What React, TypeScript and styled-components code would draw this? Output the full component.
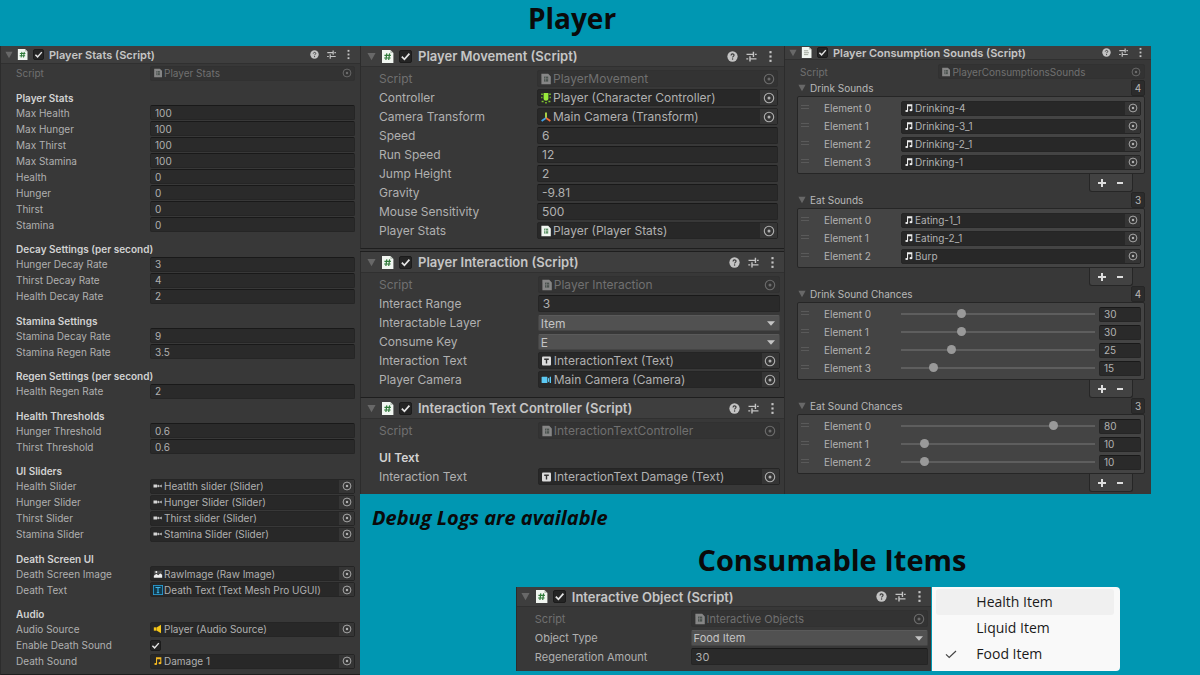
import React, { createContext, useContext, useId } from 'react';
import styled, { createGlobalStyle, css } from 'styled-components';

const GlobalStyle = createGlobalStyle`
  * { box-sizing: border-box; }
  body {
    margin: 0;
    background: #0097b2;
    font-family: Inter, 'Liberation Sans', sans-serif;
  }
  h1, h2, h3, p, ul { margin: 0; padding: 0; }
  ul { list-style: none; }
  button, input, select { font: inherit; color: inherit; margin: 0; }
`;

interface Density {
  font: number;
  title: number;
  header: number;
  row: number;
  field: number;
  heading: number;
  headingGap: number;
  icon: number;
  iconGap: number;
  arrow: number;
  start: number;
  inset: number;
  labelPart: number;
  valuePart: number;
  topGap: number;
  bottomGap: number;
}

const compact: Density = {
  font: 10, title: 11, header: 18, row: 16, field: 15, heading: 14, headingGap: 9,
  icon: 11, iconGap: 5, arrow: 9, start: 4, inset: 16, labelPart: 134, valuePart: 205,
  topGap: 1, bottomGap: 5,
};

const roomy: Density = {
  font: 12, title: 13, header: 21, row: 19, field: 17, heading: 18, headingGap: 9,
  icon: 13, iconGap: 6, arrow: 10, start: 6, inset: 19, labelPart: 158, valuePart: 241,
  topGap: 2, bottomGap: 8,
};

const sounds: Density = {
  ...compact, header: 14, row: 17, labelPart: 138, valuePart: 206, topGap: 3, bottomGap: 2,
};

const item: Density = {
  ...roomy, font: 11, header: 20, start: 4, labelPart: 156, valuePart: 238, bottomGap: 5,
};

const DensityContext = createContext<Density>(compact);

/* ---------- page ---------- */

const Page = styled.main`
  min-height: 100vh;
  display: flex;
  flex-direction: column;
`;

const PageTitle = styled.h1`
  font-family: 'Open Sans', 'Noto Sans', sans-serif;
  font-size: 28px;
  font-weight: 700;
  line-height: 36px;
  padding: 0 56px 10px 0;
  text-align: center;
  color: #0a0a0a;
`;

const Columns = styled.div`
  flex: 1;
  display: grid;
  grid-template-columns: 3fr 7fr;
`;

const RightSide = styled.div`
  min-width: 0;
`;

const TopPanels = styled.div`
  display: grid;
  grid-template-columns: 424fr 367fr 49fr;
  align-items: start;
`;

const Stack = styled.div`
  min-width: 0;
`;

const Note = styled.p`
  margin-top: 10px;
  padding-left: 12px;
  font-family: 'Open Sans', 'Noto Sans', sans-serif;
  font-size: 20px;
  font-style: italic;
  font-weight: 700;
  line-height: 28px;
  color: #0a0a0a;
`;

const ItemArea = styled.section`
  display: grid;
  grid-template-columns: 155fr 416fr 188fr 79fr;
  column-gap: 1px;
`;

const ItemTitle = styled.h2`
  grid-column: 2 / 4;
  padding-left: 28px;
  font-family: 'Open Sans', 'Noto Sans', sans-serif;
  font-size: 29px;
  font-weight: 700;
  line-height: 55px;
  text-align: center;
  color: #0a0a0a;
`;

const ItemPanel = styled.div`
  grid-column: 2;
  min-width: 0;
`;

const Menu = styled.ul`
  padding: 2px 6px 3px 4px;
  background: #f9f9f9;
  border-radius: 0 4px 4px 0;
`;

const MenuItem = styled.button<{ $active?: boolean }>`
  width: 100%;
  height: 26px;
  display: flex;
  align-items: center;
  border: 0;
  padding: 0 0 1px 9px;
  border-radius: 3px;
  background: ${(p) => (p.$active ? '#f0f0f0' : 'transparent')};
  font-family: 'Open Sans', 'Noto Sans', sans-serif;
  font-size: 14px;
  color: #1b1b1b;
  white-space: nowrap;
`;

const MenuMark = styled.span`
  width: 31px;
  display: flex;
`;

/* ---------- inspector parts ---------- */

const PanelBox = styled.section<{ $separated?: boolean }>`
  display: flex;
  flex-direction: column;
  min-width: 0;
  background: #383838;
  color: #b6b6b6;
  border-left: 1px solid #2c2c2c;
  ${(p) => p.$separated && css`
    border-bottom: 1px solid #1e1e1e;
  `}
`;

const Divider = styled.div`
  height: 3px;
  background: #383838;
  border-bottom: 1px solid #1e1e1e;
`;

const HeaderBar = styled.header<{ $d: Density; $end: number }>`
  height: ${(p) => p.$d.header}px;
  display: flex;
  align-items: center;
  padding: 0 ${(p) => p.$end}px 0 ${(p) => p.$d.start}px;
  background: #3e3e3e;
  border-bottom: 1px solid #303030;
`;

const Foldout = styled.button<{ $w: number }>`
  width: ${(p) => p.$w}px;
  height: 12px;
  display: flex;
  align-items: center;
  justify-content: flex-start;
  border: 0;
  padding: 0;
  background: none;
  color: #686868;
  flex: none;
`;

const HeaderIcon = styled.span<{ $gap: number }>`
  display: flex;
  margin: 0 5px 0 ${(p) => p.$gap - 2}px;
`;

const PanelTitle = styled.h3<{ $d: Density }>`
  flex: 1;
  min-width: 0;
  margin-left: ${(p) => p.$d.iconGap}px;
  font-size: ${(p) => p.$d.title}px;
  font-weight: 600;
  line-height: ${(p) => p.$d.header - 2}px;
  white-space: nowrap;
  color: #c6c6c6;
`;

const Tools = styled.div`
  display: flex;
  gap: 6px;
`;

const ToolButton = styled.button<{ $size: number }>`
  width: ${(p) => p.$size}px;
  height: ${(p) => p.$size}px;
  display: flex;
  align-items: center;
  justify-content: center;
  padding: 0;
  border: 0;
  background: none;
  color: #c4c4c4;
`;

const Body = styled.div<{ $d: Density; $end: number; $fill?: boolean }>`
  padding: ${(p) => `${p.$d.topGap}px ${p.$end}px ${p.$d.bottomGap}px ${p.$d.inset - 1}px`};
  display: flex;
  flex-direction: column;
  ${(p) => p.$fill && css`
    flex: 1;
    justify-content: space-between;
  `}
`;

const Group = styled.div`
  display: flex;
  flex-direction: column;
`;

const GroupTitle = styled.h3<{ $d: Density }>`
  margin-top: ${(p) => p.$d.headingGap}px;
  font-size: ${(p) => p.$d.font}px;
  line-height: ${(p) => p.$d.heading}px;
  font-weight: 600;
  color: #d2d2d2;
`;

const Row = styled.div<{ $d: Density; $dim?: boolean }>`
  height: ${(p) => p.$d.row}px;
  display: grid;
  grid-template-columns: ${(p) => `${p.$d.labelPart}fr ${p.$d.valuePart}fr`};
  align-items: center;
  font-size: ${(p) => p.$d.font}px;
  color: ${(p) => (p.$dim ? '#707070' : '#b0b0b0')};
`;

const RowLabel = styled.label`
  white-space: nowrap;
  min-width: 0;
`;

const TextInput = styled.input<{ $h: number }>`
  width: 100%;
  min-width: 0;
  height: ${(p) => p.$h}px;
  padding: 0 4px;
  border: 1px solid #252525;
  border-top-color: #191919;
  border-radius: 2px;
  background: #2a2a2a;
`;

const ObjectBox = styled.div<{ $h: number; $dim?: boolean }>`
  min-width: 0;
  height: ${(p) => p.$h}px;
  display: flex;
  align-items: center;
  gap: 1px;
  padding-left: 2px;
  border: 1px solid ${(p) => (p.$dim ? '#313131' : '#252525')};
  border-radius: 2px;
  background: ${(p) => (p.$dim ? '#333333' : '#282828')};
`;

const ObjectName = styled.span`
  flex: 1;
  min-width: 0;
  overflow: hidden;
  white-space: nowrap;
`;

const Picker = styled.button<{ $w: number }>`
  align-self: stretch;
  width: ${(p) => p.$w}px;
  flex: none;
  display: flex;
  align-items: center;
  justify-content: center;
  border: 0;
  padding: 0;
  background: #353535;
  color: #b0b0b0;
  &:disabled { background: none; color: #6c6c6c; }
`;

const SelectWrap = styled.div<{ $h: number }>`
  height: ${(p) => p.$h}px;
  display: grid;
  grid-template-columns: 1fr 12px;
  align-items: center;
  background: #515151;
  border: 1px solid #454545;
  border-top-color: #5a5a5a;
  border-radius: 2px;
  color: #c4c4c4;
  svg { grid-area: 1 / 2; pointer-events: none; }
`;

const Select = styled.select`
  grid-area: 1 / 1 / 2 / 3;
  width: 100%;
  height: 100%;
  appearance: none;
  border: 0;
  padding: 0 2px 1px;
  background: none;
`;

const CheckWrap = styled.span<{ $size: number }>`
  width: ${(p) => p.$size}px;
  height: ${(p) => p.$size}px;
  flex: none;
  display: grid;
  svg { grid-area: 1 / 1; pointer-events: none; }
`;

const CheckInput = styled.input`
  grid-area: 1 / 1;
  width: 100%;
  height: 100%;
  appearance: none;
  background: #242424;
  border: 1px solid #1b1b1b;
  border-radius: 2px;
`;

/* ---------- list parts ---------- */

const ListHead = styled.div`
  height: 16px;
  margin-left: -2px;
  display: flex;
  align-items: center;
  font-size: 10px;
  color: #b8b8b8;
`;

const ListName = styled.span`
  flex: 1;
  padding-left: 3px;
`;

const Count = styled.input`
  width: 14px;
  height: 16px;
  padding: 0;
  text-align: center;
  border: 1px solid #262626;
  border-radius: 2px;
  background: #2c2c2c;
`;

const ListBox = styled.div`
  margin-left: -3px;
  padding: 2px 3px 2px 3px;
  border: 1px solid #262626;
  border-radius: 2px;
  background: #444444;
`;

const ListRow = styled.div`
  height: 18px;
  display: grid;
  grid-template-columns: 23px 77px 1fr;
  align-items: center;
  font-size: 10px;
  color: #b2b2b2;
`;

const Grip = styled.span`
  width: 8px;
  height: 4px;
  margin-bottom: 3px;
  border-top: 1px solid #5a5a5a;
  border-bottom: 1px solid #5a5a5a;
`;

const SliderCell = styled.div`
  display: grid;
  grid-template-columns: 1fr 42px;
  column-gap: 4px;
  align-items: center;
`;

const Range = styled.input`
  appearance: none;
  width: 100%;
  min-width: 0;
  height: 9px;
  background: none;
  &::-webkit-slider-runnable-track {
    height: 2px;
    background: #5e5e5e;
  }
  &::-webkit-slider-thumb {
    appearance: none;
    width: 9px;
    height: 9px;
    margin-top: -4px;
    border-radius: 50%;
    background: #999999;
  }
`;

const ListFoot = styled.div`
  align-self: flex-end;
  width: 44px;
  height: 18px;
  margin-right: 12px;
  display: flex;
  padding: 0 3px;
  border: 1px solid #262626;
  border-top: 0;
  border-radius: 0 0 3px 3px;
  background: #424242;
`;

const FootButton = styled.button`
  flex: 1;
  display: flex;
  align-items: center;
  justify-content: center;
  border: 0;
  padding: 0;
  background: none;
  color: #dedede;
`;

/* ---------- icons ---------- */

const Triangle = ({ size = 8 }: { size?: number }) => (
  <svg width={size} height={size} viewBox="0 0 10 10"><path d="M0.5 1h9L5 9.2z" fill="currentColor" /></svg>
);

const SelectArrow = () => (
  <svg width="8" height="5" viewBox="0 0 8 5"><path d="M0 0.2h8L4 4.8z" fill="currentColor" /></svg>
);

const ScriptIcon = ({ size, kind = 'color' }: { size: number; kind?: 'color' | 'small' | 'dim' | 'plain' }) => {
  const paper = kind === 'dim' ? '#868686' : '#f1f6f1';
  if (kind === 'dim' || kind === 'small') {
    return (
      <svg width={size} height={size} viewBox="0 0 12 12">
        <path d="M1.4 0.8h6.8L10.8 3.4v7.8H1.4z" fill={paper} />
        <path d="M4 3.6h4.2v5H4z" fill={kind === 'dim' ? '#4a524e' : '#5f9468'} />
        <path d="M5.4 3.6v5M4 5.8h4.2" stroke={paper} strokeWidth="0.6" />
      </svg>
    );
  }
  return (
    <svg width={size} height={size} viewBox="0 0 13 13">
      <path d="M1 0h8.4L12.4 3v10H1z" fill={paper} />
      <path d="M9.4 0v3h3z" fill="#b9c2b9" />
      {kind === 'plain' ? (
        <path d="M3.5 4.5h5M3.5 6.8h6M3.5 9h5" stroke="#9aa093" strokeWidth="1.1" fill="none" />
      ) : (
        <path d="M5.8 3.4L4.9 10M8.6 3.4L7.7 10M3.4 5.4h6.5M3.1 8h6.5" stroke="#2f7a3a" strokeWidth="1.2" fill="none" />
      )}
    </svg>
  );
};

const HelpIcon = ({ size }: { size: number }) => (
  <svg width={size} height={size} viewBox="0 0 12 12">
    <circle cx="6" cy="6" r="5.6" fill="currentColor" />
    <path d="M4.4 4.8c0-2.2 3.3-2.1 3.3-.2 0 1.2-1.6 1.2-1.6 2.4" stroke="#3a3a3a" strokeWidth="1.2" fill="none" />
    <circle cx="6.1" cy="8.7" r="0.8" fill="#3a3a3a" />
  </svg>
);

const PresetIcon = ({ size }: { size: number }) => (
  <svg width={size} height={size} viewBox="0 0 12 12" stroke="currentColor" strokeWidth="1.3" fill="none">
    <path d="M1.4 4h6M9.2 4h1.6M7.8 1.6v4.8M1.2 8.2h1.8M5 8.2h5.6M4.6 5.8v4.8" />
  </svg>
);

const DotsIcon = ({ size }: { size: number }) => (
  <svg width={size} height={size} viewBox="0 0 12 12" fill="currentColor">
    <rect x="5" y="1" width="2" height="2" /><rect x="5" y="5" width="2" height="2" /><rect x="5" y="9" width="2" height="2" />
  </svg>
);

const CheckMark = ({ size }: { size: number }) => (
  <svg width={size} height={size} viewBox="0 0 12 12">
    <path d="M2.6 6.2L5 8.6L9.6 3.4" stroke="#e4e4e4" strokeWidth="1.6" fill="none" />
  </svg>
);

const TargetIcon = ({ size }: { size: number }) => (
  <svg width={size} height={size} viewBox="0 0 12 12">
    <circle cx="6" cy="6" r="4.7" stroke="currentColor" strokeWidth="1.1" fill="none" />
    <circle cx="6" cy="6" r="1.5" fill="currentColor" />
  </svg>
);

type Glyph = 'script' | 'scriptDim' | 'slider' | 'image' | 'tmp' | 'audio' | 'clip' | 'clipWhite' | 'controller' | 'transform' | 'text' | 'camera';

const note = (fill: string) => (
  <g fill={fill}>
    <path d="M3.6 1.4h6.4v7.4H8.7V3.8H4.9v6H3.6z" />
    <ellipse cx="3.2" cy="9.6" rx="1.7" ry="1.3" />
    <ellipse cx="8.3" cy="8.6" rx="1.7" ry="1.3" />
  </g>
);

const glyphs: Partial<Record<Glyph, React.ReactNode>> = {
  slider: <g fill="#d6d6d6"><rect x="0.6" y="4.2" width="4.4" height="3.6" /><path d="M5 5.4h1.6v1.2H5zM6.2 4.2L8.2 6 6.2 7.8zM10.4 4.2L8 6l2.4 1.8z" /></g>,
  image: <g><path d="M1 2h10v4L8.5 4.6 6.5 7 4 5.4 1 8z" fill="#4c4c4c" /><path d="M1 10.4V8.2L4 5.6l2.4 1.8L8.6 5 11 7v3.4z" fill="#efefef" /><circle cx="4" cy="3.5" r="1.2" fill="#efefef" /></g>,
  tmp: <g><rect x="0.5" y="0.5" width="11" height="11" fill="#123a4c" stroke="#2a9fd6" /><path d="M3 3h6M6 3v6.4M4.6 9.2h2.8" stroke="#3fb6ea" strokeWidth="1.2" /></g>,
  audio: <g fill="#f5c518"><rect x="1" y="4" width="3.4" height="4" /><path d="M4.8 4L9.6 1v10L4.8 8z" /></g>,
  clip: note('#f5b921'),
  clipWhite: note('#ededed'),
  controller: <g><path d="M3.6 1h4.8v5.6c0 3-4.8 3-4.8 0z" fill="#9aec3c" /><path d="M1.2 2.2h1.6M9.2 2.2h1.6M1.2 5.4h1.2M9.6 5.4h1.2M1.6 9.4h2M8.4 9.4h2M5.2 10.8h1.6" stroke="#7cc42e" strokeWidth="1.5" /></g>,
  transform: <g fill="none" strokeWidth="1.8"><path d="M6 7V1.4" stroke="#b6e04a" /><path d="M6 7L1.6 10" stroke="#3f9fe8" /><path d="M6 7l4.4 3" stroke="#ef6a35" /></g>,
  text: <g><rect x="1" y="1.6" width="9" height="9" rx="1" fill="#dcdcdc" /><path d="M3.2 4.2h4.6M5.5 4.2v4.4" stroke="#333333" strokeWidth="1.4" /></g>,
  camera: <g fill="#5cc8f2"><rect x="0.6" y="2.8" width="5.8" height="6.2" rx="0.6" /><path d="M7 4.4l1.2-1v5L7 7.4zM8.8 2.8H10v6.2H8.8z" /></g>,
};

const AssetIcon = ({ name, size }: { name: Glyph; size: number }) => {
  if (name === 'script') return <ScriptIcon size={size} kind="small" />;
  if (name === 'scriptDim') return <ScriptIcon size={size} kind="dim" />;
  return <svg width={size} height={size} viewBox="0 0 12 12">{glyphs[name]}</svg>;
};

/* ---------- composed controls ---------- */

const Check = ({ size, id, label }: { size: number; id?: string; label?: string }) => (
  <CheckWrap $size={size}>
    <CheckInput type="checkbox" id={id} aria-label={label} defaultChecked />
    <CheckMark size={size} />
  </CheckWrap>
);

const ObjectField = ({ id, icon, value, dim, h, size }: { id: string; icon: Glyph; value: string; dim?: boolean; h: number; size: number }) => (
  <ObjectBox $h={h} $dim={dim}>
    <AssetIcon name={icon} size={size - 1} />
    <ObjectName>{value}</ObjectName>
    <Picker id={id} $w={size + 4} disabled={dim}><TargetIcon size={size - 1} /></Picker>
  </ObjectBox>
);

interface FieldProps {
  label: string;
  value?: string;
  icon?: Glyph;
  kind?: 'text' | 'object' | 'select' | 'check';
  dim?: boolean;
}

const Field = ({ label, value = '', icon = 'script', kind = 'text', dim }: FieldProps) => {
  const d = useContext(DensityContext);
  const id = useId();
  return (
    <Row $d={d} $dim={dim}>
      <RowLabel htmlFor={id}>{label}</RowLabel>
      {kind === 'text' && <TextInput id={id} $h={d.field} defaultValue={value} />}
      {kind === 'object' && <ObjectField id={id} icon={icon} value={value} dim={dim} h={d.field} size={d.icon} />}
      {kind === 'select' && (
        <SelectWrap $h={d.field - 1}>
          <Select id={id} defaultValue={value}><option>{value}</option></Select>
          <SelectArrow />
        </SelectWrap>
      )}
      {kind === 'check' && <Check size={d.icon} id={id} />}
    </Row>
  );
};

const Script = ({ name }: { name: string }) => <Field label="Script" value={name} icon="scriptDim" kind="object" dim />;

interface PanelProps {
  title: string;
  density: Density;
  bodyEnd: number;
  toolsEnd: number;
  fill?: boolean;
  separated?: boolean;
  plainIcon?: boolean;
  children: React.ReactNode;
}

const Panel = ({ title, density: d, bodyEnd, toolsEnd, fill, separated, plainIcon, children }: PanelProps) => (
  <DensityContext.Provider value={d}>
    <PanelBox $separated={separated}>
      <HeaderBar $d={d} $end={toolsEnd}>
        <Foldout $w={d.arrow} aria-label={`Collapse ${title}`}><Triangle size={d.arrow - 1} /></Foldout>
        <HeaderIcon $gap={d.iconGap}><ScriptIcon size={d.icon} kind={plainIcon ? 'plain' : 'color'} /></HeaderIcon>
        <Check size={d.icon} label={`Enable ${title}`} />
        <PanelTitle $d={d}>{title}</PanelTitle>
        <Tools>
          <ToolButton $size={d.icon} aria-label="Help"><HelpIcon size={d.icon - 2} /></ToolButton>
          <ToolButton $size={d.icon} aria-label="Presets"><PresetIcon size={d.icon} /></ToolButton>
          <ToolButton $size={d.icon} aria-label="More"><DotsIcon size={d.icon} /></ToolButton>
        </Tools>
      </HeaderBar>
      <Body $d={d} $end={bodyEnd} $fill={fill}>{children}</Body>
    </PanelBox>
  </DensityContext.Provider>
);

const Section = ({ title, children }: { title: string; children: React.ReactNode }) => {
  const d = useContext(DensityContext);
  return (
    <Group>
      <GroupTitle $d={d}>{title}</GroupTitle>
      {children}
    </Group>
  );
};

const List = ({ title, clips, chances }: { title: string; clips?: string[]; chances?: number[] }) => {
  const id = useId();
  const rows: (string | number)[] = clips ?? chances ?? [];
  return (
    <Group>
      <ListHead>
        <Foldout $w={9} aria-label={`Collapse ${title}`}><Triangle size={8} /></Foldout>
        <ListName>{title}</ListName>
        <Count aria-label={`${title} size`} defaultValue={rows.length} />
      </ListHead>
      <ListBox>
        {rows.map((value, i) => (
          <ListRow key={i}>
            <Grip />
            <RowLabel htmlFor={`${id}${i}`}>Element {i}</RowLabel>
            {clips ? (
              <ObjectField id={`${id}${i}`} icon="clipWhite" value={String(value)} h={15} size={11} />
            ) : (
              <SliderCell>
                <Range type="range" id={`${id}${i}`} min={0} max={100} defaultValue={value} />
                <TextInput $h={15} aria-label={`Element ${i} value`} defaultValue={value} />
              </SliderCell>
            )}
          </ListRow>
        ))}
      </ListBox>
      <ListFoot>
        <FootButton aria-label="Add"><svg width="10" height="10" viewBox="0 0 10 10"><path d="M1 5h8M5 1v8" stroke="currentColor" strokeWidth="2" /></svg></FootButton>
        <FootButton aria-label="Remove"><svg width="10" height="10" viewBox="0 0 10 10"><path d="M2 5h6" stroke="currentColor" strokeWidth="2" /></svg></FootButton>
      </ListFoot>
    </Group>
  );
};

const PlayerStats = () => (
  <Panel title="Player Stats (Script)" density={compact} bodyEnd={5} toolsEnd={6} fill separated>
    <Script name="Player Stats" />
    <Section title="Player Stats">
      {['Max Health', 'Max Hunger', 'Max Thirst', 'Max Stamina'].map((l) => <Field key={l} label={l} value="100" />)}
      {['Health', 'Hunger', 'Thirst', 'Stamina'].map((l) => <Field key={l} label={l} value="0" />)}
    </Section>
    <Section title="Decay Settings (per second)">
      <Field label="Hunger Decay Rate" value="3" />
      <Field label="Thirst Decay Rate" value="4" />
      <Field label="Health Decay Rate" value="2" />
    </Section>
    <Section title="Stamina Settings">
      <Field label="Stamina Decay Rate" value="9" />
      <Field label="Stamina Regen Rate" value="3.5" />
    </Section>
    <Section title="Regen Settings (per second)">
      <Field label="Health Regen Rate" value="2" />
    </Section>
    <Section title="Health Thresholds">
      <Field label="Hunger Threshold" value="0.6" />
      <Field label="Thirst Threshold" value="0.6" />
    </Section>
    <Section title="UI Sliders">
      <Field label="Health Slider" value="Heatlth slider (Slider)" kind="object" icon="slider" />
      <Field label="Hunger Slider" value="Hunger Slider (Slider)" kind="object" icon="slider" />
      <Field label="Thirst Slider" value="Thirst slider (Slider)" kind="object" icon="slider" />
      <Field label="Stamina Slider" value="Stamina Slider (Slider)" kind="object" icon="slider" />
    </Section>
    <Section title="Death Screen UI">
      <Field label="Death Screen Image" value="RawImage (Raw Image)" kind="object" icon="image" />
      <Field label="Death Text" value="Death Text (Text Mesh Pro UGUI)" kind="object" icon="tmp" />
    </Section>
    <Section title="Audio">
      <Field label="Audio Source" value="Player (Audio Source)" kind="object" icon="audio" />
      <Field label="Enable Death Sound" kind="check" />
      <Field label="Death Sound" value="Damage 1" kind="object" icon="clip" />
    </Section>
  </Panel>
);

const App = () => (
  <>
    <GlobalStyle />
    <Page>
      <PageTitle>Player</PageTitle>
      <Columns>
        <PlayerStats />
        <RightSide>
          <TopPanels>
            <Stack>
              <Panel title="Player Movement (Script)" density={roomy} bodyEnd={6} toolsEnd={7} separated>
                <Script name="PlayerMovement" />
                <Field label="Controller" value="Player (Character Controller)" kind="object" icon="controller" />
                <Field label="Camera Transform" value="Main Camera (Transform)" kind="object" icon="transform" />
                <Field label="Speed" value="6" />
                <Field label="Run Speed" value="12" />
                <Field label="Jump Height" value="2" />
                <Field label="Gravity" value="-9.81" />
                <Field label="Mouse Sensitivity" value="500" />
                <Field label="Player Stats" value="Player (Player Stats)" kind="object" icon="script" />
              </Panel>
              <Divider />
              <Panel title="Player Interaction (Script)" density={roomy} bodyEnd={4} toolsEnd={5} separated>
                <Script name="Player Interaction" />
                <Field label="Interact Range" value="3" />
                <Field label="Interactable Layer" value="Item" kind="select" />
                <Field label="Consume Key" value="E" kind="select" />
                <Field label="Interaction Text" value="InteractionText (Text)" kind="object" icon="text" />
                <Field label="Player Camera" value="Main Camera (Camera)" kind="object" icon="camera" />
              </Panel>
              <Panel title="Interaction Text Controller (Script)" density={roomy} bodyEnd={4} toolsEnd={5}>
                <Script name="InteractionTextController" />
                <Section title="UI Text">
                  <Field label="Interaction Text" value="InteractionText Damage (Text)" kind="object" icon="text" />
                </Section>
              </Panel>
            </Stack>
            <Panel title="Player Consumption Sounds (Script)" density={sounds} bodyEnd={6} toolsEnd={5} plainIcon>
              <Script name="PlayerConsumptionsSounds" />
              <List title="Drink Sounds" clips={['Drinking-4', 'Drinking-3_1', 'Drinking-2_1', 'Drinking-1']} />
              <List title="Eat Sounds" clips={['Eating-1_1', 'Eating-2_1', 'Burp']} />
              <List title="Drink Sound Chances" chances={[30, 30, 25, 15]} />
              <List title="Eat Sound Chances" chances={[80, 10, 10]} />
            </Panel>
          </TopPanels>
          <Note>Debug Logs are available</Note>
          <ItemArea>
            <ItemTitle>Consumable Items</ItemTitle>
            <ItemPanel>
              <Panel title="Interactive Object (Script)" density={item} bodyEnd={3} toolsEnd={5}>
                <Script name="Interactive Objects" />
                <Field label="Object Type" value="Food Item" kind="select" />
                <Field label="Regeneration Amount" value="30" />
              </Panel>
            </ItemPanel>
            <Menu>
              <li><MenuItem $active><MenuMark />Health Item</MenuItem></li>
              <li><MenuItem><MenuMark />Liquid Item</MenuItem></li>
              <li>
                <MenuItem>
                  <MenuMark>
                    <svg width="12" height="12" viewBox="0 0 12 12"><path d="M1 6.4l3.2 3L11 3" stroke="#444444" strokeWidth="1.2" fill="none" /></svg>
                  </MenuMark>
                  Food Item
                </MenuItem>
              </li>
            </Menu>
          </ItemArea>
        </RightSide>
      </Columns>
    </Page>
  </>
);

export default App;
